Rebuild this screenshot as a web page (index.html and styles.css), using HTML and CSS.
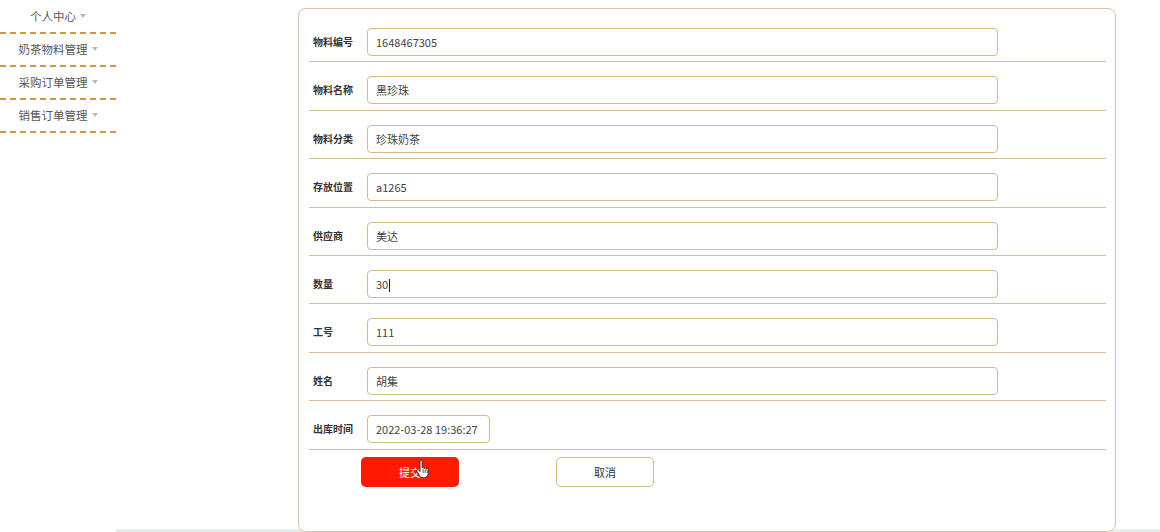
FILE: index.html
```html
<!DOCTYPE html>
<html>
    <head>
        <meta charset="UTF-8">
        <title>物料出库</title>
        <link rel="stylesheet" href="styles.css">
    </head>
    <body>
        <div id="page">
            <div id="sidebar">
                <div class="menu-item">个人中心<span class="caret"></span></div>
                <div class="menu-item">奶茶物料管理<span class="caret"></span></div>
                <div class="menu-item">采购订单管理<span class="caret"></span></div>
                <div class="menu-item">销售订单管理<span class="caret"></span></div>
            </div>
            <div id="main">
                <div class="card">
                    <div class="row"><label>物料编号</label><input class="field" value="1648467305"></div>
                    <div class="row"><label>物料名称</label><input class="field" value="黑珍珠"></div>
                    <div class="row"><label>物料分类</label><input class="field" value="珍珠奶茶"></div>
                    <div class="row"><label>存放位置</label><input class="field" value="a1265"></div>
                    <div class="row"><label>供应商</label><input class="field" value="美达"></div>
                    <div class="row"><label>数量</label><div class="field fake">30<span class="text-cursor"></span></div></div>
                    <div class="row"><label>工号</label><input class="field" value="111"></div>
                    <div class="row"><label>姓名</label><input class="field" value="胡集"></div>
                    <div class="row"><label>出库时间</label><input class="field short" value="2022-03-28 19:36:27"></div>
                    <div class="buttons">
                        <button class="btn submit">提交
                            <svg class="hand" width="14" height="18" viewBox="0 0 14 18">
                                <path d="M4 1.5c0-.8.5-1.2 1.1-1.2s1.1.4 1.1 1.2V8c0-.6.5-1 1-1s1 .4 1 1v.6c0-.6.5-1 1-1s1 .4 1 1v.8c0-.6.5-1 1-1s1 .4 1 1v3.8c0 2.6-1.6 4.6-4.2 4.6H7c-1.6 0-2.6-.7-3.5-2L1 11.3c-.4-.6-.3-1.3.3-1.6.6-.3 1.2-.1 1.6.4L4 11.6z" fill="#fff" stroke="#222" stroke-width="0.9" stroke-linejoin="round"/>
                                <path d="M7.1 9v4M9.1 9.4v3.6M11.1 10v3" stroke="#222" stroke-width="0.7"/>
                            </svg>
                        </button>
                        <button class="btn cancel">取消</button>
                    </div>
                </div>
            </div>
        </div>
    </body>
</html>
```
FILE: styles.css
```css
body{
    margin: 0;
    background: #fff;
    font-family: "Noto Sans CJK SC", "Noto Sans", sans-serif;
    color: #333;
}

#page{
    display: flex;
    height: 532px;
    overflow: hidden;
}

#sidebar{
    width: 116px;
    flex-shrink: 0;
}

.menu-item{
    height: 31px;
    line-height: 31px;
    text-align: center;
    font-size: 11.5px;
    color: #555;
    border-bottom: 2px dashed #d39544;
}

.menu-item:first-child{
    height: 32px;
    line-height: 32px;
}

.caret{
    display: inline-block;
    margin-left: 4px;
    vertical-align: middle;
    border-top: 4px solid #bbb;
    border-left: 3.5px solid transparent;
    border-right: 3.5px solid transparent;
    position: relative;
    top: -2px;
}

#main{
    flex: 1;
    background: linear-gradient(to top, #e7eeeb 3px, #fff 3px);
}

.card{
    margin: 8px 0 0 182px;
    width: 818px;
    height: 524px;
    border: 1px solid #dcc2a2;
    border-radius: 8px;
    background: #fff;
    padding: 5px 9px 0 10px;
    box-sizing: border-box;
}

.row{
    display: flex;
    align-items: flex-start;
    padding-top: 14px;
    height: 33.4px;
    border-bottom: 1px solid #d8bb98;
}

.row label{
    width: 54px;
    padding-left: 4px;
    font-size: 10px;
    font-weight: bold;
    line-height: 28px;
    color: #333;
}

.field{
    width: 631px;
    height: 28px;
    box-sizing: border-box;
    border: 1px solid #d7b98e;
    border-radius: 4px;
    padding: 0 8px;
    font-family: "Noto Sans CJK SC", "Open Sans", sans-serif;
    font-size: 11px;
    color: #444;
    outline: none;
}

.field.short{
    width: 123px;
}

.fake{
    line-height: 26px;
}

.text-cursor{
    display: inline-block;
    width: 1px;
    height: 13px;
    background: #222;
    vertical-align: middle;
    margin-left: 1px;
}

.buttons{
    display: flex;
    gap: 97px;
    padding: 7px 0 0 52px;
}

.btn{
    width: 98px;
    height: 30px;
    border-radius: 5px;
    font-family: "Noto Sans CJK SC", sans-serif;
    font-size: 11px;
}

.submit{
    background: #ff1a00;
    border: none;
    color: #fff;
    position: relative;
}

.cancel{
    background: #fff;
    border: 1px solid #d7b98e;
    color: #333;
}

.hand{
    position: absolute;
    left: 55px;
    top: 3px;
}
```
